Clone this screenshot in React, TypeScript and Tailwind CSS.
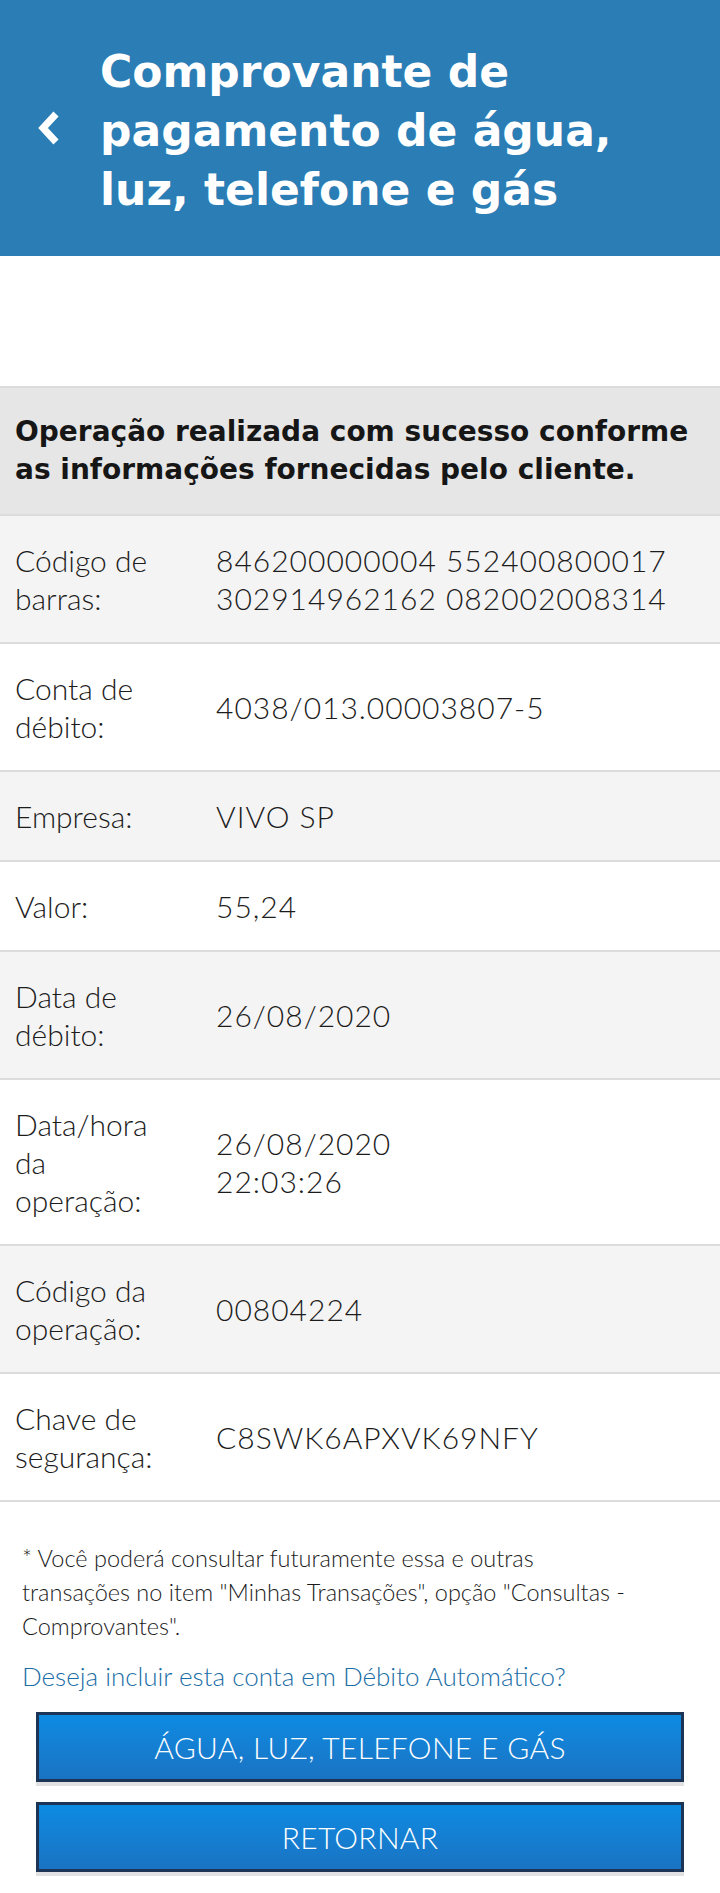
import { Fragment } from 'react'

interface Row {
  label: string[]
  value: string[]
}

const rows: Row[] = [
  { label: ['Código de', 'barras:'], value: ['846200000004 552400800017', '302914962162 082002008314'] },
  { label: ['Conta de', 'débito:'], value: ['4038/013.00003807-5'] },
  { label: ['Empresa:'], value: ['VIVO SP'] },
  { label: ['Valor:'], value: ['55,24'] },
  { label: ['Data de', 'débito:'], value: ['26/08/2020'] },
  { label: ['Data/hora', 'da', 'operação:'], value: ['26/08/2020', '22:03:26'] },
  { label: ['Código da', 'operação:'], value: ['00804224'] },
  { label: ['Chave de', 'segurança:'], value: ['C8SWK6APXVK69NFY'] },
]

function Lines({ lines }: { lines: string[] }) {
  return (
    <>
      {lines.map((line, i) => (
        <Fragment key={i}>
          {i > 0 && <br />}
          {line}
        </Fragment>
      ))}
    </>
  )
}

function BackIcon() {
  return (
    <svg width="26" height="36" viewBox="0 0 26 36" fill="none">
      <polyline
        points="20,4 7,18 20,32"
        stroke="white"
        strokeWidth="7"
        strokeLinejoin="miter"
        strokeLinecap="butt"
      />
    </svg>
  )
}

function ActionButton({ children }: { children: string }) {
  return (
    <div className="shadow-[0_4px_0_#e1e1e3]">
      <button className="flex h-[70px] w-full items-center justify-center border-[3px] border-[#1c3556] bg-gradient-to-b from-[#0b8be2] to-[#1a73c2] text-[30px] font-light uppercase tracking-[0.3px] text-white">
        {children}
      </button>
    </div>
  )
}

export default function App() {
  return (
    <main className="min-h-[1893px] w-[720px] bg-white font-['Lato','Liberation_Sans',sans-serif] text-[#1c1c1c]">
      <header className="flex h-[256px] items-center bg-[#2a7db5]">
        <div className="flex w-[100px] shrink-0 justify-center pr-[2px]">
          <BackIcon />
        </div>
        <h1 className="pt-[4px] pr-6 font-['DejaVu_Sans',sans-serif] text-[44px] font-bold leading-[59px] text-white">
          Comprovante de
          <br />
          pagamento de água,
          <br />
          luz, telefone e gás
        </h1>
      </header>

      <div className="h-[130px]" />

      <section className="border-t-2 border-[#dcdcdc] bg-[#e6e6e6] px-[15px] py-[25px]">
        <p className="font-['DejaVu_Sans',sans-serif] text-[28px] font-bold leading-[38px] text-[#161616]">
          Operação realizada com sucesso conforme
          <br />
          as informações fornecidas pelo cliente.
        </p>
      </section>

      <div className="border-b-2 border-[#dcdcdc]">
        {rows.map((row, i) => (
          <div
            key={i}
            className={`flex border-t-2 border-[#dcdcdc] px-[15px] py-[25px] text-[30px] font-light leading-[38px] ${
              i % 2 === 0 ? 'bg-[#f5f4f4]' : 'bg-white'
            }`}
          >
            <div className="w-[201px] shrink-0">
              <Lines lines={row.label} />
            </div>
            <div className="flex flex-1 items-center tracking-[1px]">
              <span>
                <Lines lines={row.value} />
              </span>
            </div>
          </div>
        ))}
      </div>

      <div className="px-[22px] pt-[39px] font-light">
        <p className="text-[23.5px] leading-[34px]">
          * Você poderá consultar futuramente essa e outras
          <br />
          transações no item "Minhas Transações", opção "Consultas -
          <br />
          Comprovantes".
        </p>
        <p className="mt-[16px] text-[26px] leading-[34px] text-[#1b6ea6]">
          Deseja incluir esta conta em Débito Automático?
        </p>
      </div>

      <div className="flex flex-col gap-[20px] px-[36px] pt-[19px] pb-[16px]">
        <ActionButton>Água, luz, telefone e gás</ActionButton>
        <ActionButton>Retornar</ActionButton>
      </div>
    </main>
  )
}
